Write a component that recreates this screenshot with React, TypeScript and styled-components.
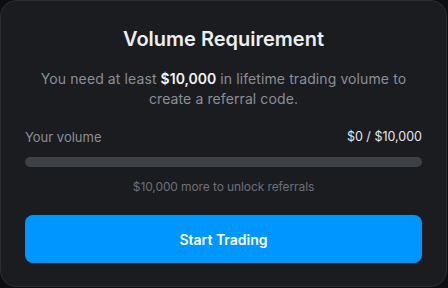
import styled, { createGlobalStyle } from 'styled-components';

const GlobalStyle = createGlobalStyle`
    html, body {
        margin: 0;
        padding: 0;
        background: #0d0e10;
    }
    * {
        box-sizing: border-box;
    }
`;

const Card = styled.div`
    width: 447px;
    height: 287px;
    display: flex;
    flex-direction: column;
    padding: 24px 24px 23px;
    background-color: #1a1c1f;
    border: 1px solid #2a2d31;
    border-radius: 16px;
    font-family: 'Inter', 'Liberation Sans', sans-serif;
`;

const Title = styled.h1`
    margin: 0 0 16px;
    font-size: 20px;
    line-height: 28px;
    font-weight: 600;
    text-align: center;
    color: #eceef0;
`;

const Description = styled.p`
    margin: 0;
    font-size: 14px;
    line-height: 20px;
    letter-spacing: 0.1px;
    text-align: center;
    color: #8a8f98;

    strong {
        color: #f3f4f6;
        font-weight: 600;
        letter-spacing: 0;
    }
`;

const Row = styled.div`
    display: flex;
    justify-content: space-between;
    align-items: center;
    margin-top: 18px;
    line-height: 20px;
`;

const Label = styled.span<{ $bright?: boolean }>`
    font-size: ${(p) => (p.$bright ? '12.5px' : '13px')};
    color: ${(p) => (p.$bright ? '#e6e8eb' : '#8a8f98')};
`;

const Track = styled.div`
    height: 10px;
    margin-top: 10px;
    border-radius: 999px;
    background-color: #3d4044;
    overflow: hidden;
`;

const Fill = styled.div`
    height: 100%;
    background-color: #0096ff;
`;

const Caption = styled.p`
    margin: 12px 0 0;
    font-size: 12px;
    line-height: 16px;
    letter-spacing: -0.1px;
    text-align: center;
    color: #6b7079;
`;

const Button = styled.button`
    margin-top: 20px;
    height: 48px;
    border: none;
    border-radius: 8px;
    background-color: #0096ff;
    color: #ffffff;
    font-family: inherit;
    font-size: 14px;
    font-weight: 600;
    cursor: pointer;
`;

export default function App() {
    const volume = 0;
    const target = 10000;
    const pct = Math.min(100, (volume / target) * 100);

    return (
        <>
            <GlobalStyle />
            <Card>
                <Title>Volume Requirement</Title>
                <Description>
                    You need at least <strong>$10,000</strong> in lifetime trading volume to create a referral code.
                </Description>
                <Row>
                    <Label>Your volume</Label>
                    <Label $bright>$0 / $10,000</Label>
                </Row>
                <Track>
                    <Fill style={{ width: `${pct}%` }} />
                </Track>
                <Caption>$10,000 more to unlock referrals</Caption>
                <Button>Start Trading</Button>
            </Card>
        </>
    );
}
